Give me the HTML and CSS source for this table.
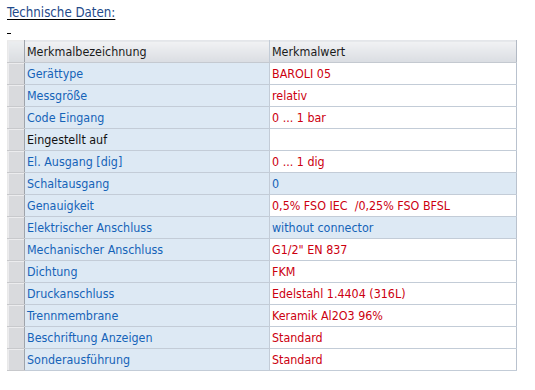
FILE: index.html
```html
<!DOCTYPE html>
<html lang="de">
<head>
<meta charset="utf-8">
<title>Technische Daten</title>
<link rel="stylesheet" href="styles.css">
</head>
<body>
<div class="page">
  <h2 class="title">Technische Daten:</h2>
  <div class="mark"><span class="dash">&nbsp;</span></div>
  <table class="grid">
    <thead>
      <tr>
        <th class="rh"></th>
        <th class="c1">Merkmalbezeichnung</th>
        <th class="c2">Merkmalwert</th>
      </tr>
    </thead>
    <tbody>
      <tr><td class="rh"></td><td class="name">Gerättype</td><td class="val red">BAROLI 05</td></tr>
      <tr><td class="rh"></td><td class="name">Messgröße</td><td class="val red">relativ</td></tr>
      <tr><td class="rh"></td><td class="name">Code Eingang</td><td class="val red">0 ... 1 bar</td></tr>
      <tr><td class="rh"></td><td class="name black">Eingestellt auf</td><td class="val"></td></tr>
      <tr><td class="rh"></td><td class="name">El. Ausgang [dig]</td><td class="val red">0 ... 1 dig</td></tr>
      <tr><td class="rh"></td><td class="name">Schaltausgang</td><td class="val blue">0</td></tr>
      <tr><td class="rh"></td><td class="name">Genauigkeit</td><td class="val red">0,5% FSO IEC &nbsp;/0,25% FSO BFSL</td></tr>
      <tr><td class="rh"></td><td class="name">Elektrischer Anschluss</td><td class="val blue">without connector</td></tr>
      <tr><td class="rh"></td><td class="name">Mechanischer Anschluss</td><td class="val red">G1/2" EN 837</td></tr>
      <tr><td class="rh"></td><td class="name">Dichtung</td><td class="val red">FKM</td></tr>
      <tr><td class="rh"></td><td class="name">Druckanschluss</td><td class="val red">Edelstahl 1.4404 (316L)</td></tr>
      <tr><td class="rh"></td><td class="name">Trennmembrane</td><td class="val red">Keramik Al2O3 96%</td></tr>
      <tr><td class="rh"></td><td class="name">Beschriftung Anzeigen</td><td class="val red">Standard</td></tr>
      <tr><td class="rh"></td><td class="name">Sonderausführung</td><td class="val red">Standard</td></tr>
    </tbody>
  </table>
</div>
</body>
</html>
```

FILE: styles.css
```css
html, body {
  margin: 0;
  padding: 0;
  background: #ffffff;
}

.page {
  padding: 5px 0 0 7px;
  font-family: "DejaVu Sans Condensed", "DejaVu Sans", sans-serif;
  font-size: 12.4px;
}

.title {
  margin: 0;
  font-size: 13.2px;
  font-weight: normal;
  line-height: 16px;
  color: #1f4a8a;
  text-decoration: underline;
  text-decoration-color: #000000;
  text-underline-offset: 2px;
  display: inline-block;
}

.mark {
  height: 19px;
  position: relative;
}

.dash {
  display: inline-block;
  width: 4px;
  height: 1px;
  margin-top: 12px;
  background: #000000;
  vertical-align: top;
  font-size: 1px;
}

.grid {
  border-collapse: collapse;
  width: 510px;
  table-layout: fixed;
}

.grid th,
.grid td {
  height: 21px;
  padding: 0 0 0 2px;
  border: 1px solid #c3ccd7;
  text-align: left;
  white-space: nowrap;
  overflow: hidden;
  line-height: 20px;
}

.grid th {
  font-weight: normal;
  color: #1a1a1a;
  background: linear-gradient(#f1f2f4, #dadde2);
  border-top-color: #e4e6ea;
  border-bottom-color: #c4c9d0;
}

.grid th.c2 {
  border-right: 1px solid #b2b9c4;
}

.grid .rh {
  width: 16px;
  padding: 0;
  background: #d9dadd;
  border-color: #ebebeb #9fa4ab #c8c9cc #e9e9e9;
  box-shadow: inset 1px 1px 0 #ececee;
}

.grid th.rh {
  background: linear-gradient(#eceef0, #d9dce0);
}

.grid .c1 {
  width: 242px;
}

.grid td.name {
  background: #dde9f4;
  color: #1563b8;
}

.grid td.name.black {
  color: #111111;
}

.grid td.val {
  background: #ffffff;
  border-right-color: #b9c2ce;
}

.grid td.val.blue {
  background: #dde9f4;
  color: #1563b8;
}

.grid td.val.red {
  color: #cc0010;
}
```
